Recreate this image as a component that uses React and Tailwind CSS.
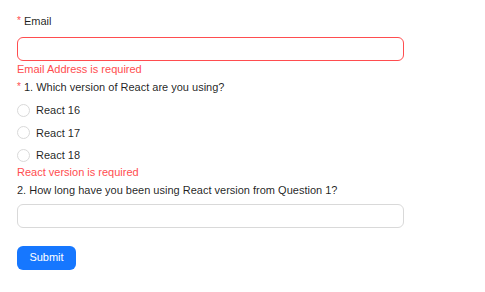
import { useState } from 'react'

function Label({ required, children }) {
  return (
    <div className="flex h-[20px] items-center text-[11px] leading-[20px] text-[rgba(0,0,0,0.88)]">
      {required && <span className="mr-[3px] text-[10px] text-[#ff4d4f]">*</span>}
      {children}
    </div>
  )
}

function Radio({ label, checked, onChange }) {
  return (
    <label className="flex h-[22.5px] cursor-pointer items-center text-[11px] text-[rgba(0,0,0,0.88)]">
      <span
        onClick={onChange}
        className={
          'mr-[6px] box-border inline-block h-[13px] w-[13px] rounded-full border bg-white ' +
          (checked ? 'border-[4px] border-[#1677ff]' : 'border-[#d9d9d9]')
        }
      />
      {label}
    </label>
  )
}

export default function App() {
  const [version, setVersion] = useState(null)

  return (
    <div className="px-[17px] pt-[11px] font-['Liberation_Sans',Arial,sans-serif]">
      <Label required>Email</Label>
      <input
        className="mt-[6px] box-border block h-[24px] w-[387px] rounded-[6px] border border-[#ff4d4f] px-[11px] text-[11px] outline-none"
      />
      <div className="h-[16px] text-[11px] leading-[16px] text-[#ff4d4f]">Email Address is required</div>

      <Label required>1. Which version of React are you using?</Label>
      <div className="mt-[2px] flex flex-col">
        {['React 16', 'React 17', 'React 18'].map((v) => (
          <Radio key={v} label={v} checked={version === v} onChange={() => setVersion(v)} />
        ))}
      </div>
      <div className="-mt-[3px] h-[16px] text-[11px] leading-[16px] text-[#ff4d4f]">React version is required</div>

      <Label>2. How long have you been using React version from Question 1?</Label>
      <input
        className="mt-[4px] box-border block h-[24px] w-[387px] rounded-[6px] border border-[#d9d9d9] px-[11px] text-[11px] outline-none"
      />

      <button className="mt-[18px] box-border h-[24px] w-[59px] rounded-[6px] bg-[#1677ff] text-[11px] text-white">
        Submit
      </button>
    </div>
  )
}
